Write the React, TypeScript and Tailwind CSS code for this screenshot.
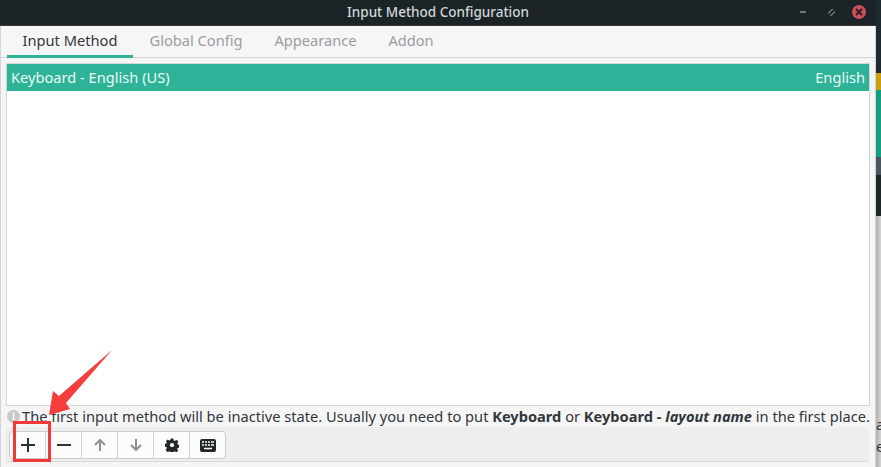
import React from "react";

const Btn = ({ children, last, first }: { children: React.ReactNode; last?: boolean; first?: boolean }) => (
  <div className={`${last ? "w-[35px]" : "w-[36px]"} h-[26px] bg-[#fcfcfc] flex items-center justify-center ${last ? "" : "border-r border-[#d0d0d0]"} ${first ? "rounded-l-[4px]" : ""} ${last ? "rounded-r-[4px]" : ""}`}>
    {children}
  </div>
);

export default function App() {
  return (
    <div className="w-[881px] h-[467px] flex overflow-hidden relative bg-[#2a3438] font-['Noto_Sans',sans-serif]">
      <div className="w-[876px] h-full flex flex-col bg-[#f5f5f5] shrink-0">
        <div className="h-[26px] bg-[#1b2326] shrink-0 flex items-center justify-center relative border-b border-[#33393b]">
          <span className="text-[#cfd6d8] text-[13.5px] font-medium">Input Method Configuration</span>
          <div className="absolute right-[10px] top-[5px] flex items-center">
            <svg width="6" height="2" viewBox="0 0 6 2" className="mr-[22px]"><rect width="6" height="2" fill="#72787a" /></svg>
            <svg width="7" height="7" viewBox="0 0 7 7" className="mr-[17px]"><path d="M0 7V3.600L3.600 0H5.500L0 5.500zM7 0V3.400L3.400 7H1.500L7 1.500z" fill="#72787a" /></svg>
            <div className="w-[14px] h-[14px] rounded-full bg-[#c9505a] flex items-center justify-center">
              <svg width="8" height="8" viewBox="0 0 8 8"><path d="M1 1l6 6M7 1l-6 6" stroke="#2a1c20" strokeWidth="1.8" /></svg>
            </div>
          </div>
        </div>
        <div className="flex flex-col flex-1 border-l border-r border-[#d4d4d4] min-h-0">
          <div className="h-[32px] shrink-0 border-b border-[#d4d4d4] flex items-stretch px-[6px] bg-[#f6f6f6] text-[14.63px] leading-[20px] text-[#9a9da0]">
            <div className="w-[126px] flex items-start pt-[4px] justify-center text-[#31363b] border-b-[3px] border-[#2eb398] h-[32px]">Input Method</div>
            <div className="w-[126px] flex items-start pt-[4px] justify-center">Global Config</div>
            <div className="w-[113px] flex items-start pt-[4px] justify-center">Appearance</div>
            <div className="w-[78px] flex items-start pt-[4px] justify-center">Addon</div>
          </div>
          <div className="flex-1 flex flex-col px-[5px] pt-[5px] min-h-0">
            <div className="h-[343px] shrink-0 bg-white border border-[#d6d6d6]">
              <div className="h-[27px] bg-[#2eb398] text-[#eafaf6] text-[14.63px] leading-[20px] flex items-start justify-between px-[4px] pt-[3px]">
                <span>Keyboard - English (US)</span>
                <span>English</span>
              </div>
            </div>
            <div className="h-[21px] shrink-0 flex items-center whitespace-nowrap text-[14.63px] text-[#31363b] relative">
              <div className="w-[13px] h-[13px] rounded-full bg-[#c8c8c8] flex items-center justify-center text-white text-[10px] font-bold ml-[1px] mr-[2px] shrink-0">i</div>
              <span>The first input method will be inactive state. Usually you need to put <b>Keyboard</b> or <b>Keyboard - <i>layout name</i></b> in the first place.</span>
            </div>
            <div className="h-[35px] shrink-0 bg-[#eeeeee] rounded-b-[3px] border-b border-[#d8d8d8] flex items-start pt-[4px] px-[3px] mr-[1px]">
              <div className="flex border border-[#cccccc] rounded-[4px]">
                <Btn first><svg width="14" height="14" viewBox="0 0 14 14"><path d="M7 0v14M0 7h14" stroke="#2b3033" strokeWidth="2" /></svg></Btn>
                <Btn><svg width="14" height="14" viewBox="0 0 14 14"><path d="M0 7h14" stroke="#2b3033" strokeWidth="2" /></svg></Btn>
                <Btn><svg width="14" height="14" viewBox="0 0 14 14"><path d="M7 13V2M2 7l5-5 5 5" stroke="#8e9294" strokeWidth="2" fill="none" /></svg></Btn>
                <Btn><svg width="14" height="14" viewBox="0 0 14 14"><path d="M7 1v11M2 7l5 5 5-5" stroke="#8e9294" strokeWidth="2" fill="none" /></svg></Btn>
                <Btn><svg width="14" height="14" viewBox="0 0 24 24"><path fillRule="evenodd" fill="#23282b" d="M9.500 0h5l.7 3.600 2 .9L20.300 2.400l3.500 3.500-2.100 3.100.9 2 3.400.7v5l-3.600.7-.9 2 2.100 3-3.500 3.500-3.100-2.100-2 .9-.7 3.400h-5l-.7-3.600-2-.9-3 2.100L.1 20.600l2.100-3.100-.9-2L-2 14.800v-5l3.600-.7.9-2L.4 5 3.900 1.500 7 3.600l2-.9z M12 8a4 4 0 1 0 0 8 4 4 0 0 0 0-8z" transform="translate(1 1) scale(.92)" /></svg></Btn>
                <Btn last><svg width="16" height="13" viewBox="0 0 16 13"><rect width="16" height="13" rx="2" fill="#23282b" /><path d="M2 3h2M5 3h2M8 3h2M11 3h3M2 6h2M5 6h2M8 6h2M11 6h3M4 9.500h8" stroke="#fcfcfc" strokeWidth="1.500" /></svg></Btn>
              </div>
            </div>
          </div>
        </div>
      </div>
      <div className="flex-1 flex flex-col relative overflow-hidden">
        <div className="h-[73px] shrink-0 bg-[#1f2a30]" />
        <div className="h-[17px] shrink-0 bg-[#c9a010]" />
        <div className="h-[67px] shrink-0 bg-[#14a080]" />
        <div className="h-[18px] shrink-0 bg-[#4a5560]" />
        <div className="h-[41px] shrink-0 bg-[#1c2528]" />
        <div className="flex-1 bg-linear-to-r from-[#b0b0b0] to-[#d4d4d4] text-[14.63px] text-[#31363b] leading-[22px] pt-[197px]">
          <div>a</div><div>e</div>
        </div>
      </div>
      <div className="absolute left-[13px] top-[421px] w-[38px] h-[41px] border-[3px] border-[#f03a3a]" />
      <svg className="absolute left-0 top-0 pointer-events-none" width="881" height="467" viewBox="0 0 881 467">
        <path d="M112 350L66 403L70 409L49 415L53 391L59 396Z" fill="#f63d3d" />
      </svg>
    </div>
  );
}
